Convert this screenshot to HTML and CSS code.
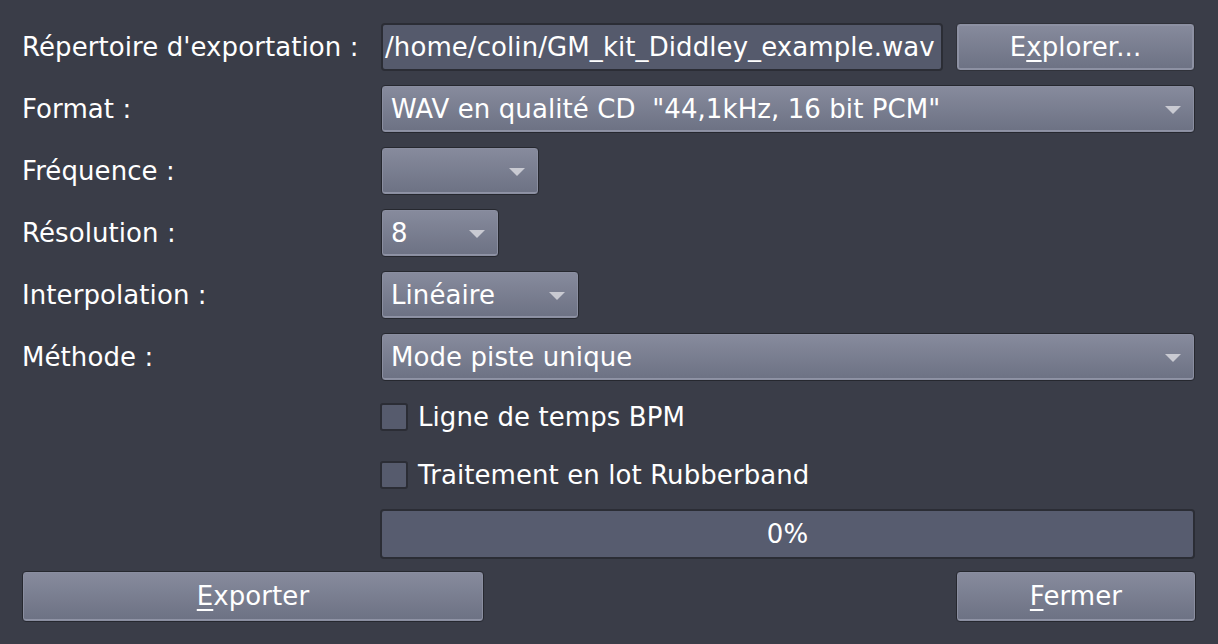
FILE: index.html
```html
<!DOCTYPE html>
<html lang="fr">
<head>
<meta charset="utf-8">
<title>Exporter</title>
<link rel="stylesheet" href="styles.css">
</head>
<body>
<div class="dialog">
  <div class="row">
    <div class="label">Répertoire d'exportation :</div>
    <div class="field split">
      <div class="lineedit">/home/colin/GM_kit_Diddley_example.wav</div>
      <div class="button browse">E<u>x</u>plorer...</div>
    </div>
  </div>
  <div class="row">
    <div class="label">Format :</div>
    <div class="field">
      <div class="combo full"><span>WAV en qualité CD&nbsp; "44,1kHz, 16 bit PCM"</span><i class="arrow"></i></div>
    </div>
  </div>
  <div class="row">
    <div class="label">Fréquence :</div>
    <div class="field">
      <div class="combo w-freq"><span></span><i class="arrow"></i></div>
    </div>
  </div>
  <div class="row">
    <div class="label">Résolution :</div>
    <div class="field">
      <div class="combo w-res"><span>8</span><i class="arrow"></i></div>
    </div>
  </div>
  <div class="row">
    <div class="label">Interpolation :</div>
    <div class="field">
      <div class="combo w-interp"><span>Linéaire</span><i class="arrow"></i></div>
    </div>
  </div>
  <div class="row">
    <div class="label">Méthode :</div>
    <div class="field">
      <div class="combo full"><span>Mode piste unique</span><i class="arrow"></i></div>
    </div>
  </div>
  <div class="row check-row first">
    <div class="label"></div>
    <div class="field check"><span class="box"></span><span>Ligne de temps BPM</span></div>
  </div>
  <div class="row check-row second">
    <div class="label"></div>
    <div class="field check"><span class="box"></span><span>Traitement en lot Rubberband</span></div>
  </div>
  <div class="row progress-row">
    <div class="label"></div>
    <div class="field"><div class="progress">0%</div></div>
  </div>
  <div class="actions">
    <div class="button export"><u>E</u>xporter</div>
    <div class="button close"><u>F</u>ermer</div>
  </div>
</div>
</body>
</html>
```

FILE: styles.css
```css
html, body {
  margin: 0;
  padding: 0;
  background: #3a3d48;
}
body {
  width: 1218px;
  height: 644px;
  overflow: hidden;
  font-family: "DejaVu Sans", "Liberation Sans", sans-serif;
  font-size: 26px;
  letter-spacing: 0.08px;
  color: #ffffff;
}
.dialog {
  display: flex;
  flex-direction: column;
  padding: 23px 23px 0 22px;
}
.row {
  display: flex;
  align-items: center;
  height: 48px;
  margin-bottom: 14px;
}
.label {
  width: 359px;
  flex: none;
  line-height: 48px;
  white-space: nowrap;
}
.field {
  flex: 1;
  display: flex;
  height: 100%;
  min-width: 0;
}
.split {
  gap: 13px;
}
.lineedit {
  flex: 1;
  box-sizing: border-box;
  height: 48px;
  background: #555a6c;
  border: 2px solid #2b2d35;
  border-radius: 4px;
  padding: 0 6px 0 2px;
  line-height: 44px;
  white-space: nowrap;
  overflow: hidden;
}
.button,
.combo {
  box-sizing: border-box;
  height: 48px;
  border: 1px solid #26282f;
  border-radius: 4px;
  background: linear-gradient(#878b9d, #6c7183);
  box-shadow: inset 0 0 0 1px #8a8ea0, inset 0 -2px 0 #8f93a5;
}
.button {
  text-align: center;
  line-height: 46px;
}
.button u {
  text-decoration-thickness: 2px;
  text-underline-offset: 4px;
}
.browse {
  width: 239px;
  flex: none;
  border-color: #30323a;
  box-shadow: inset 0 0 0 2px #8d91a3;
}
.combo {
  display: flex;
  align-items: center;
  justify-content: space-between;
  padding: 0 13px 0 9px;
  white-space: nowrap;
}
.combo.full { width: 100%; }
.w-freq { width: 158px; }
.w-res { width: 118px; }
.w-interp { width: 198px; }
.arrow {
  display: block;
  width: 0;
  height: 0;
  border-left: 8px solid transparent;
  border-right: 8px solid transparent;
  border-top: 8px solid #c9cad2;
  margin-top: 2px;
}
.check-row {
  height: 44px;
}
.check-row.first {
  margin-bottom: 14px;
}
.check-row.second {
  margin-bottom: 12px;
}
.check {
  align-items: center;
  gap: 10px;
}
.check .box {
  box-sizing: border-box;
  width: 28px;
  height: 28px;
  margin-left: -1px;
  background: #565b6d;
  border: 2px solid #2b2d35;
  border-radius: 3px;
}
.progress-row {
  height: 50px;
  margin-bottom: 12px;
}
.progress {
  box-sizing: border-box;
  width: calc(100% + 1px);
  height: 50px;
  margin-left: -1px;
  background: #575c6f;
  border: 2px solid #2b2d35;
  border-radius: 4px;
  text-align: center;
  line-height: 46px;
}
.actions {
  display: flex;
  justify-content: space-between;
}
.actions .button {
  height: 51px;
  line-height: 49px;
}
.export { width: 462px; }
.close { width: 240px; margin-right: -1px; }
```
